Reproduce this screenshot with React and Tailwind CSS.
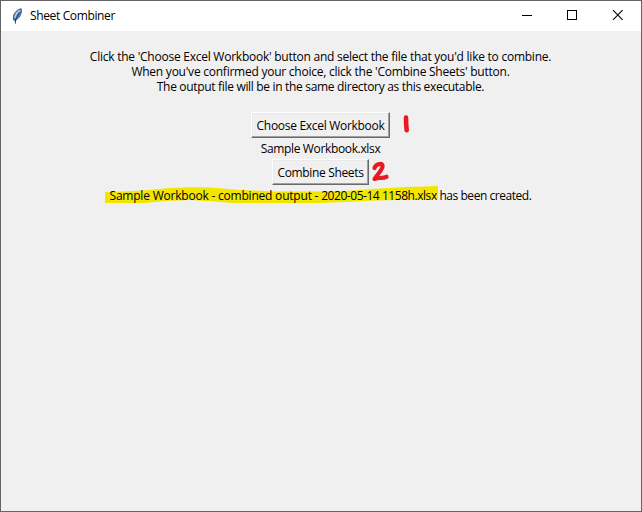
import React from "react";

function Feather() {
  return (
    <svg className="h-4 w-4 shrink-0" viewBox="0 0 16 16">
      <path d="M12.2 0.8C9 1.2 5 4.600 4.500 8.400L4.700 12L6.600 12.400C10.400 10 13 6 12.200 0.800Z" fill="#5b93d6" stroke="#33404e" strokeWidth="0.9" />
      <path d="M11.200 2C8.600 3.600 6.700 6.200 5.800 9.500" stroke="#b5d6f7" strokeWidth="1.200" fill="none" />
      <path d="M10.600 4.500L6.500 11.500L6.300 15.600" stroke="#1c2530" strokeWidth="0.9" fill="none" />
    </svg>
  );
}

function TkButton({ className, children }) {
  return (
    <button
      className={`flex h-[26px] items-center justify-center whitespace-nowrap border border-t-white border-l-white border-r-[#696969] border-b-[#696969] bg-[#f0f0f0] shadow-[inset_-1px_-1px_0_#a0a0a0,inset_1px_1px_0_#e9e9e9] ${className}`}
    >
      {children}
    </button>
  );
}

export default function App() {
  return (
    <div className="relative flex h-[512px] w-[642px] flex-col overflow-hidden border border-[#646464] bg-[#f0f0f0] font-['Open_Sans','Noto_Sans',sans-serif] text-[12px] leading-[15px] text-black">
      <header className="flex h-[30px] shrink-0 items-center justify-between bg-white pl-2">
        <div className="flex items-center gap-[5px]">
          <Feather />
          <span className="whitespace-nowrap pb-px tracking-[-0.36px]">Sheet Combiner</span>
        </div>
        <div className="flex h-full">
          <svg className="h-[30px] w-[45px]" viewBox="0 0 45 30" shapeRendering="crispEdges">
            <path d="M16 14h10v1H16z" />
          </svg>
          <svg className="h-[30px] w-[45px]" viewBox="0 0 45 30" shapeRendering="crispEdges">
            <path d="M16.5 9.5h9v9h-9z" fill="none" stroke="#000" />
          </svg>
          <svg className="h-[30px] w-[45px]" viewBox="0 0 45 30">
            <path d="M17 9.2l9.6 9.6M26.6 9.2L17 18.8" stroke="#000" strokeWidth="1.1" />
          </svg>
        </div>
      </header>
      <main className="flex flex-col items-center pt-[18px] pr-px">
        <p className="whitespace-nowrap tracking-[-0.245px]">Click the 'Choose Excel Workbook' button and select the file that you'd like to combine.</p>
        <p className="whitespace-nowrap tracking-[-0.24px]">When you've confirmed your choice, click the 'Combine Sheets' button.</p>
        <p className="whitespace-nowrap tracking-[-0.32px]">The output file will be in the same directory as this executable.</p>
        <TkButton className="mt-[18px] w-[139px] tracking-[-0.3px]">Choose Excel Workbook</TkButton>
        <p className="mt-[3px] whitespace-nowrap tracking-[-0.35px]">Sample Workbook.xlsx</p>
        <TkButton className="mt-[3px] w-[97px] tracking-[-0.34px]">Combine Sheets</TkButton>
        <p className="relative z-10 mt-[3px] whitespace-nowrap tracking-[-0.45px]">
          <span className="tracking-[-0.21px]">Sample Workbook - combined output - </span>
          2020-05-14 1158h.xlsx has been created.
        </p>
      </main>
      <svg className="pointer-events-none absolute -top-px -left-px h-[512px] w-[642px]" viewBox="0 0 642 512">
        <path d="M105 192L122 191.5L143 190.5L170 188L190 187.3L210 187.5L240 190L275 191.5L310 191.5L345 191L380 188.5L405 187L425 186.5L438 186V198.5L420 199.5L375 200.5L345 202L320 203L290 203L260 203L232 203L215 201.5L190 200L165 201L145 203L105 203Z" fill="#f2e600" />
        <path d="M406 117.500C406 121.500 406.200 126 406.700 130.300" stroke="#e8191f" strokeWidth="4.600" strokeLinecap="round" fill="none" />
        <path d="M374.500 168C375.500 164.500 381.500 162.500 382.500 165.500C383.500 169 377.500 174 374.500 179C377.500 177.500 383 178.500 386.500 176.800" stroke="#e8191f" strokeWidth="4.200" strokeLinecap="round" strokeLinejoin="round" fill="none" />
      </svg>
    </div>
  );
}
